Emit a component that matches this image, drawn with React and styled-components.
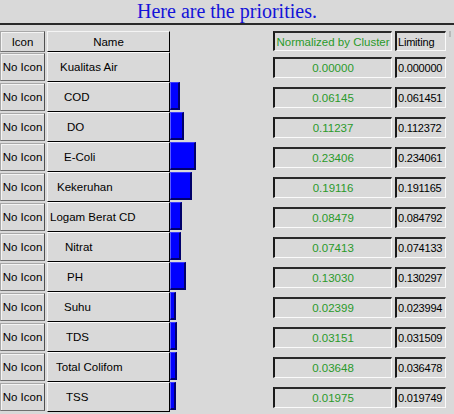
import styled, { createGlobalStyle } from "styled-components"

const GlobalStyle = createGlobalStyle`
    html, body {
        margin: 0;
        padding: 0;
        background: #d9d9d9;
    }
`

const rows = [
    { name: 'Kualitas Air', indent: 12, norm: '0.00000', limit: '0.000000', value: 0 },
    { name: 'COD', indent: 16, norm: '0.06145', limit: '0.061451', value: 0.06145 },
    { name: 'DO', indent: 19, norm: '0.11237', limit: '0.112372', value: 0.11237 },
    { name: 'E-Coli', indent: 16, norm: '0.23406', limit: '0.234061', value: 0.23406 },
    { name: 'Kekeruhan', indent: 9, norm: '0.19116', limit: '0.191165', value: 0.19116 },
    { name: 'Logam Berat CD', indent: 2, norm: '0.08479', limit: '0.084792', value: 0.08479 },
    { name: 'Nitrat', indent: 17, norm: '0.07413', limit: '0.074133', value: 0.07413 },
    { name: 'PH', indent: 19, norm: '0.13030', limit: '0.130297', value: 0.1303 },
    { name: 'Suhu', indent: 16, norm: '0.02399', limit: '0.023994', value: 0.02399 },
    { name: 'TDS', indent: 18, norm: '0.03151', limit: '0.031509', value: 0.03151 },
    { name: 'Total Colifom', indent: 8, norm: '0.03648', limit: '0.036478', value: 0.03648 },
    { name: 'TSS', indent: 18, norm: '0.01975', limit: '0.019749', value: 0.01975 },
]

const barWidth = (v) => (v > 0 ? Math.round(4 + 93 * v) : 0)

const App = () => {
    return (
        <Page>
            <GlobalStyle />
            <Title>Here are the priorities.</Title>
            <Table>
                <HeaderRow>
                    <IconCell header>Icon</IconCell>
                    <NameHeader>Name</NameHeader>
                    <BarArea />
                    <ValueBox header>Normalized by Cluster</ValueBox>
                    <LimitBox header>Limiting</LimitBox>
                    <ScrollNub />
                </HeaderRow>
                {rows.map((row) => (
                    <Row key={row.name}>
                        <IconCell>No Icon</IconCell>
                        <NameCell indent={row.indent}>{row.name}</NameCell>
                        <BarArea>
                            {row.value > 0 ? <Bar style={{ width: barWidth(row.value) }} /> : null}
                        </BarArea>
                        <ValueBox>{row.norm}</ValueBox>
                        <LimitBox>{row.limit}</LimitBox>
                    </Row>
                ))}
            </Table>
        </Page>
    )
}

export default App

const Page = styled.div`
    width: 454px;
    height: 414px;
    overflow: hidden;
    background: #d9d9d9;
    font-family: 'Liberation Sans', Arial, sans-serif;
    font-size: 11.5px;
`

const Title = styled.div`
    height: 25px;
    display: flex;
    align-items: center;
    justify-content: center;
    font-family: 'Liberation Serif', 'Times New Roman', serif;
    font-size: 20px;
    color: #1414d8;
    border-bottom: 2px solid #2a2a2a;
    box-sizing: border-box;
    padding-bottom: 1px;
`

const Table = styled.div`
    display: flex;
    flex-direction: column;
    padding-top: 6px;
`

const HeaderRow = styled.div`
    display: flex;
    height: 21px;
    align-items: stretch;
`

const Row = styled.div`
    display: flex;
    height: 30px;
    align-items: stretch;
`

const IconCell = styled.div`
    width: 45px;
    box-sizing: border-box;
    margin: ${props => (props.header ? '0' : '1px 0 1px 0')};
    margin-right: 2px;
    display: flex;
    align-items: center;
    justify-content: center;
    border: 1px solid;
    border-color: #a8a8a8 #505050 #707070 #a8a8a8;
    box-shadow: inset 1px 1px #f4f4f4;
    color: #000;
    white-space: nowrap;
`

const NameHeader = styled.div`
    width: 123px;
    box-sizing: border-box;
    display: flex;
    align-items: center;
    justify-content: center;
    border-top: 1px solid #f4f4f4;
    border-left: 1px solid #f4f4f4;
    border-right: 1px solid #000;
    border-bottom: 1px solid #000;
`

const NameCell = styled.div`
    width: 123px;
    box-sizing: border-box;
    display: flex;
    align-items: center;
    padding-left: ${props => props.indent}px;
    border-top: 1px solid #fafafa;
    border-left: 1px solid #f4f4f4;
    border-right: 1px solid #000;
    border-bottom: 1px solid #000;
    white-space: nowrap;
`

const BarArea = styled.div`
    width: 103px;
    display: flex;
    align-items: flex-start;
`

const Bar = styled.div`
    height: 28px;
    box-sizing: border-box;
    background: #0000ff;
    border-top: 1px solid #3a3aff;
    border-left: 1px solid #5a5aff;
    border-right: 2px solid #00006a;
    border-bottom: 2px solid #00006a;
`

const ValueBox = styled.div`
    width: 119px;
    box-sizing: border-box;
    margin: ${props => (props.header ? '0 0 1px 0' : '5px 0 4px 0')};
    display: flex;
    align-items: center;
    justify-content: center;
    color: #2a9a2a;
    border-top: 2px solid #2a2a2a;
    border-left: 2px solid #1a1a1a;
    border-right: 1px solid #fafafa;
    border-bottom: 1px solid #fafafa;
    white-space: nowrap;
    overflow: hidden;
`

const LimitBox = styled.div`
    width: 51px;
    box-sizing: border-box;
    margin: ${props => (props.header ? '0 0 1px 3px' : '5px 0 4px 3px')};
    display: flex;
    align-items: center;
    padding-left: 1px;
    font-size: 11px;
    letter-spacing: -0.2px;
    color: #000;
    border-top: 2px solid #2a2a2a;
    border-left: 2px solid #1a1a1a;
    border-right: 1px solid #fafafa;
    border-bottom: 1px solid #fafafa;
    white-space: nowrap;
    overflow: hidden;
`

const ScrollNub = styled.div`
    width: 2px;
    height: 6px;
    margin-left: 3px;
    background: #b8b8b8;
`
